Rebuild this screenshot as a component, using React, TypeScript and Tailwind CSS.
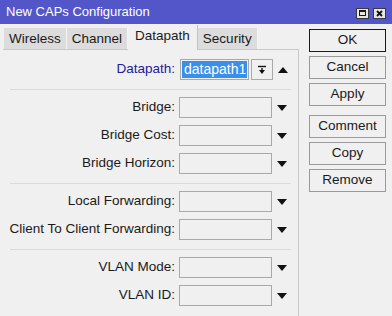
import React from "react";

const font = { fontFamily: '"Liberation Sans", Arial, sans-serif' };

const DownArrow = () => (
  <svg width="10" height="6" viewBox="0 0 10 6" className="shrink-0">
    <path d="M0 0 H10 L5 6 Z" fill="#111" />
  </svg>
);

const UpArrow = () => (
  <svg width="10" height="6" viewBox="0 0 10 6" className="shrink-0">
    <path d="M0 6 H10 L5 0 Z" fill="#111" />
  </svg>
);

const FieldRow: React.FC<{ label: string }> = ({ label }) => (
  <div className="flex items-center h-[21px]">
    <div className="w-[176px] pr-[4px] text-right text-[13.5px] text-[#1a1a1a] whitespace-nowrap">
      {label}
    </div>
    <div className="w-[93px] h-[21px] border border-[#a9a9a9] bg-[#f0f0f0]" />
    <div className="w-[20px] flex justify-center">
      <DownArrow />
    </div>
  </div>
);

const Separator = () => (
  <div className="mt-[9px] mb-[7px] mx-[7px] h-px bg-[#dadada]" />
);

const WinButton: React.FC<{ label: string; isDefault?: boolean; className?: string }> = ({
  label,
  isDefault,
  className,
}) => (
  <div
    className={[
      "h-[23px] w-[77px] flex items-center justify-center text-[13.5px] text-[#1a1a1a] bg-[#f0f0f0] border",
      isDefault ? "border-[#1a1a1a]" : "border-[#9a9a9a]",
      className || "",
    ].join(" ")}
  >
    {label}
  </div>
);

export default function App() {
  const tabs = ["Wireless", "Channel", "Datapath", "Security"];

  return (
    <div className="w-[392px] h-[316px] bg-[#f0f0f0] flex flex-col overflow-hidden" style={font}>
      {/* title bar */}
      <div className="h-[24px] bg-[#5256c8] flex items-center pl-[6px] pr-[6px] text-white text-[13px]">
        <span className="flex-1">New CAPs Configuration</span>
        <div className="flex gap-[4px] mt-[2px]">
          <div className="w-[13px] h-[11px] bg-[#e6e6e6] border border-[#3a3a3a] flex items-center justify-center">
            <div className="w-[7px] h-[6px] border border-[#1a1a1a] border-t-2" />
          </div>
          <div className="w-[13px] h-[11px] bg-[#e6e6e6] border border-[#3a3a3a] flex items-center justify-center">
            <svg width="7" height="7" viewBox="0 0 7 7">
              <path d="M1 1 L6 6 M6 1 L1 6" stroke="#111" strokeWidth="1.8" />
            </svg>
          </div>
        </div>
      </div>

      <div className="flex flex-1">
        {/* left: tabs + panel */}
        <div className="w-[299px] flex flex-col">
          <div className="flex items-end h-[25px] pl-[4px]">
            {tabs.map((t) =>
              t === "Datapath" ? (
                <div
                  key={t}
                  className="h-[25px] px-[7px] pb-[3px] flex items-center text-[13.5px] text-[#1a1a1a] bg-[#f0f0f0] border-r border-[#c4c4c4] relative top-px"
                >
                  {t}
                </div>
              ) : (
                <div
                  key={t}
                  className="h-[21px] px-[5px] pt-[1px] flex items-center text-[13.5px] text-[#1a1a1a] bg-[#dcdcdc] border-r border-[#f4f4f4]"
                >
                  {t}
                </div>
              )
            )}
          </div>

          <div className="flex-1 ml-[3px] border-t border-r border-[#c8c8c8] pt-[9px]">
            <div className="flex items-center h-[21px]">
              <div className="w-[177px] pr-[5px] text-right text-[13.5px] text-[#20209a] whitespace-nowrap">
                Datapath:
              </div>
              <div className="w-[69px] h-[21px] border border-[#a9a9a9] p-px">
                <div className="h-full bg-[#3b8fec] text-white text-[14px] leading-[17px] pl-[2px]">
                  datapath1
                </div>
              </div>
              <div className="ml-[2px] w-[22px] h-[21px] border border-[#a9a9a9] flex items-center justify-center">
                <svg width="10" height="10" viewBox="0 0 10 10">
                  <path d="M1 1.5 H9" stroke="#111" strokeWidth="1.4" />
                  <path d="M4.3 3 H5.7 V5 H8 L5 9 L2 5 H4.3 Z" fill="#111" />
                </svg>
              </div>
              <div className="w-[19px] flex justify-center">
                <UpArrow />
              </div>
            </div>

            <Separator />
            <div className="flex flex-col gap-[7px]">
              <FieldRow label="Bridge:" />
              <FieldRow label="Bridge Cost:" />
              <FieldRow label="Bridge Horizon:" />
            </div>

            <Separator />
            <div className="flex flex-col gap-[7px]">
              <FieldRow label="Local Forwarding:" />
              <FieldRow label="Client To Client Forwarding:" />
            </div>

            <Separator />
            <div className="flex flex-col gap-[7px]">
              <FieldRow label="VLAN Mode:" />
              <FieldRow label="VLAN ID:" />
            </div>
          </div>
        </div>

        {/* right: buttons */}
        <div className="flex flex-col gap-[4px] pl-[10px] pt-[5px]">
          <WinButton label="OK" isDefault />
          <WinButton label="Cancel" />
          <WinButton label="Apply" />
          <WinButton label="Comment" className="mt-[5px]" />
          <WinButton label="Copy" />
          <WinButton label="Remove" />
        </div>
      </div>
    </div>
  );
}
